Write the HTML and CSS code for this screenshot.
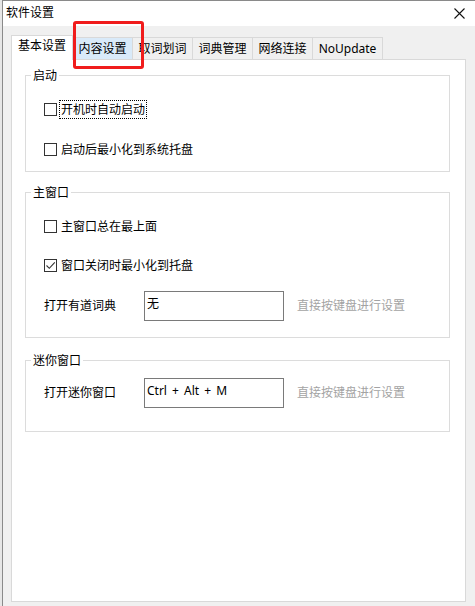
FILE: index.html
```html
<!DOCTYPE html>
<html lang="zh-CN">
<head>
<meta charset="utf-8">
<title>软件设置</title>
<link rel="stylesheet" href="styles.css">
</head>
<body>
<div class="window">
  <div class="titlebar">
    <span class="title">软件设置</span>
    <svg class="close" width="11" height="11" viewBox="0 0 11 11"><path d="M0.5 0.5 L10.5 10.5 M10.5 0.5 L0.5 10.5" stroke="#111" stroke-width="1.1" fill="none"/></svg>
  </div>
  <div class="client">
    <div class="tabs">
      <div class="tab active">基本设置</div>
      <div class="tab hover">内容设置</div>
      <div class="tab">取词划词</div>
      <div class="tab">词典管理</div>
      <div class="tab">网络连接</div>
      <div class="tab wide">NoUpdate</div>
    </div>
    <div class="panel">
      <div class="group g1">
        <div class="group-title">启动</div>
        <div class="check first"><span class="box"></span><span class="ctext focus">开机时自动启动</span></div>
        <div class="check next"><span class="box"></span><span class="ctext">启动后最小化到系统托盘</span></div>
      </div>
      <div class="group g2">
        <div class="group-title">主窗口</div>
        <div class="check first"><span class="box"></span><span class="ctext">主窗口总在最上面</span></div>
        <div class="check next"><span class="box"><svg width="11" height="11" viewBox="0 0 11 11"><path d="M1.5 5.5 L4.3 8.3 L9.8 2.3" stroke="#333" stroke-width="1.1" fill="none"/></svg></span><span class="ctext">窗口关闭时最小化到托盘</span></div>
        <div class="field"><span class="flabel">打开有道词典</span><span class="input">无</span><span class="hint">直接按键盘进行设置</span></div>
      </div>
      <div class="group g3">
        <div class="group-title">迷你窗口</div>
        <div class="field"><span class="flabel">打开迷你窗口</span><span class="input">Ctrl + Alt + M</span><span class="hint">直接按键盘进行设置</span></div>
      </div>
    </div>
  </div>
</div>
<div class="annot"></div>
</body>
</html>
```
FILE: styles.css
```css
html, body {
  margin: 0;
  padding: 0;
}
body {
  width: 475px;
  height: 606px;
  overflow: hidden;
  background: #e6e6e6;
  font-family: "Noto Sans", "Noto Sans CJK SC", sans-serif;
  font-size: 12px;
  color: #000;
}
.window {
  margin-left: 2px;
  height: 606px;
  border-left: 1px solid #8a8a8a;
  border-top: 1px solid #8a8a8a;
  box-sizing: border-box;
  background: #f0f0f0;
}
.titlebar {
  height: 25px;
  background: #fff;
  display: flex;
  align-items: center;
  padding: 0 10px 0 3px;
}
.title {
  line-height: 22px;
  margin-top: -2px;
}
.close {
  margin-left: auto;
  display: block;
}
.client {
  padding: 9px 9px 0 8px;
}
.tabs {
  display: flex;
  align-items: flex-end;
}
.tab {
  box-sizing: border-box;
  width: 61px;
  height: 22px;
  border: 1px solid #d9d9d9;
  border-bottom: none;
  margin-left: -1px;
  background: #f0f0f0;
  text-align: center;
  line-height: 20px;
  padding-top: 1px;
}
.tab.active {
  width: 62px;
  height: 25px;
  margin-left: 0;
  margin-bottom: -1px;
  padding-top: 0;
  background: #fff;
  position: relative;
  z-index: 1;
}
.tab.hover {
  background: #d9eaf9;
}
.tab.wide {
  width: 71px;
}
.panel {
  box-sizing: border-box;
  height: 543px;
  background: #fff;
  border: 1px solid #d9d9d9;
  padding-top: 15px;
}
.group {
  margin: 0 15px 0 13px;
  border: 1px solid #dcdcdc;
  display: flex;
  flex-direction: column;
  align-items: flex-start;
}
.group-title {
  margin: -8px 0 0 5px;
  padding: 0 2px;
  line-height: 16px;
  background: #fff;
}
.g1 {
  padding-bottom: 12px;
}
.g1 .first {
  margin-top: 15px;
}
.g1 .next {
  margin-top: 20px;
}
.g2 {
  margin-top: 20px;
  padding-bottom: 16px;
}
.g2 .first {
  margin-top: 15px;
}
.g2 .next {
  margin-top: 19px;
}
.g2 .field {
  margin-top: 16px;
}
.g3 {
  margin-top: 22px;
  padding-bottom: 23px;
}
.g3 .field {
  margin-top: 9px;
}
.check {
  display: flex;
  align-items: center;
  height: 20px;
  padding-left: 18px;
}
.box {
  box-sizing: border-box;
  width: 13px;
  height: 13px;
  border: 1px solid #333;
  background: #fff;
  display: flex;
  align-items: center;
  justify-content: center;
}
.box svg {
  display: block;
}
.ctext {
  margin-left: 2px;
  padding: 0 1px;
  line-height: 17px;
  border: 1px dotted transparent;
}
.ctext.focus {
  border-color: #000;
}
.field {
  display: flex;
  align-items: center;
  padding-left: 18px;
}
.flabel {
  width: 100px;
  line-height: 17px;
  margin-top: -2px;
}
.input {
  box-sizing: border-box;
  width: 140px;
  height: 30px;
  border: 1px solid #7a7a7a;
  padding: 3px 2px 0;
  line-height: 17px;
  background: #fff;
  word-spacing: 2px;
}
.hint {
  margin-left: 13px;
  color: #a3a3a3;
  line-height: 17px;
  margin-top: -2px;
}
.annot {
  position: absolute;
  left: 73px;
  top: 21px;
  width: 71px;
  height: 48px;
  box-sizing: border-box;
  border: 3px solid #f01c1c;
  border-radius: 3px;
}
```
